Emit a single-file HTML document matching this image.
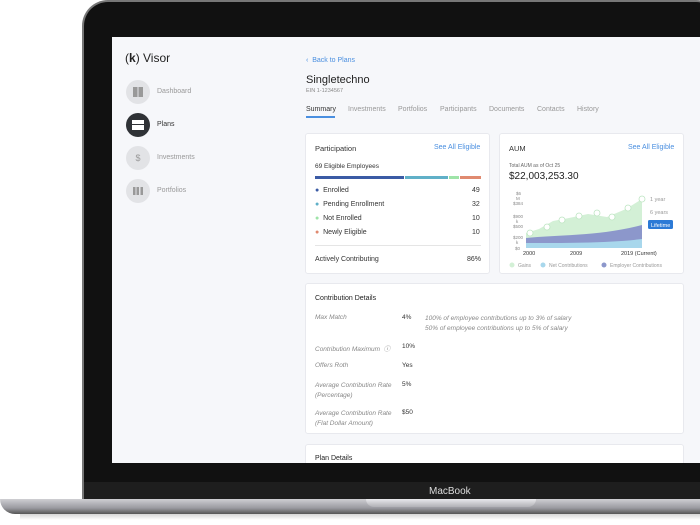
<!DOCTYPE html>
<html><head><style>
*{margin:0;padding:0;box-sizing:border-box}
body{width:700px;height:525px;background:#fff;position:relative;overflow:hidden;font-family:"Liberation Sans",sans-serif;color:#333}
.abs{position:absolute}
.bezel{left:82px;top:0;width:640px;height:502px;background:#111;border-radius:26px 26px 0 0;border:2px solid #777;border-bottom:none}
.chin{left:84px;top:482px;width:620px;height:18px;background:#1e1e1e}
.base{left:0;top:499px;width:700px;height:15px;background:linear-gradient(#cfcfd3,#9a9aa0 60%,#555 100%);border-radius:0 0 0 30px}
.notch{left:366px;top:499px;width:170px;height:8px;background:linear-gradient(#e9e9ec,#b0b0b5);border-radius:0 0 8px 8px}
.shadow{left:20px;top:512px;width:680px;height:8px;background:linear-gradient(#777,#fff);opacity:.4}
.screen{left:112px;top:37px;width:588px;height:426px;background:#f6f7fa;overflow:hidden}
.card{position:absolute;background:#fff;border:1px solid #e8e9ee;border-radius:3px}
.t{position:absolute;white-space:nowrap}
.icon{position:absolute;left:14px;width:24px;height:24px;border-radius:50%;background:#e2e3e6}
.nav{position:absolute;left:45px;font-size:7px;color:#999}
.s{font-size:7px}
.lbl{font-size:6.5px;font-style:italic;color:#888}
</style></head><body>
<div class="abs shadow"></div>
<div class="abs bezel"></div>
<div class="abs chin"></div>
<div class="abs t" style="left:429px;top:486px;font-size:10px;color:#ddd">MacBook</div>
<div class="abs base"></div>
<div class="abs notch"></div>
<div class="abs screen">
 <div class="t" style="left:13px;top:14px;font-size:12px;color:#222">(<b>k</b>) Visor</div>
 <div class="icon" style="top:43px"><div style="position:absolute;left:7px;top:7px;width:10px;height:10px;background:linear-gradient(90deg,#999 45%,transparent 45%,transparent 55%,#999 55%)"></div></div>
 <div class="nav" style="top:51px">Dashboard</div>
 <div class="icon" style="top:76px;background:#2f3236"><div style="position:absolute;left:6px;top:7px;width:12px;height:10px;background:#fff;border-top:4px solid #fff"><div style="height:1px;background:#2f3236;margin-top:0"></div></div></div>
 <div class="nav" style="top:84px;color:#333">Plans</div>
 <div class="icon" style="top:109px;text-align:center;font-size:9px;line-height:24px;color:#999">$</div>
 <div class="nav" style="top:117px">Investments</div>
 <div class="icon" style="top:142px"><div style="position:absolute;left:7px;top:8px;width:10px;height:8px;background:linear-gradient(90deg,#999 25%,transparent 25%,transparent 37%,#999 37%,#999 62%,transparent 62%,transparent 75%,#999 75%)"></div></div>
 <div class="nav" style="top:150px">Portfolios</div>

 <div class="t s" style="left:194px;top:20px;color:#4a8fe0">‹ &nbsp;Back to Plans</div>
 <div class="t" style="left:194px;top:37px;font-size:11px;color:#222">Singletechno</div>
 <div class="t" style="left:194px;top:51px;font-size:5.5px;color:#888">EIN 1-1234567</div>
 <div class="t s" style="left:194px;top:69px;color:#333">Summary</div>
 <div class="abs" style="left:194px;top:79px;width:29px;height:1.5px;background:#4a8fe0"></div>
 <div class="t s" style="left:236px;top:69px;color:#999">Investments</div>
 <div class="t s" style="left:286px;top:69px;color:#999">Portfolios</div>
 <div class="t s" style="left:328px;top:69px;color:#999">Participants</div>
 <div class="t s" style="left:377px;top:69px;color:#999">Documents</div>
 <div class="t s" style="left:425px;top:69px;color:#999">Contacts</div>
 <div class="t s" style="left:465px;top:69px;color:#999">History</div>

 <div class="card" style="left:193px;top:96px;width:185px;height:141px">
  <div class="t" style="left:9px;top:10px;font-size:7.5px;color:#333">Participation</div>
  <div class="t s" style="left:128px;top:10px;color:#4a8fe0">See All Eligible</div>
  <div class="t" style="left:9px;top:29px;font-size:6.5px">69 Eligible Employees</div>
  <div class="abs" style="left:9px;top:42px;width:89px;height:3px;background:#3b5ba5"></div>
  <div class="abs" style="left:99px;top:42px;width:43px;height:3px;background:#60b0c8"></div>
  <div class="abs" style="left:143px;top:42px;width:10px;height:3px;background:#9ee4a8"></div>
  <div class="abs" style="left:154px;top:42px;width:21px;height:3px;background:#e08a70"></div>
  <div class="t s" style="left:9px;top:53px"><span style="color:#3b5ba5">●</span> &nbsp;Enrolled</div><div class="t s" style="left:166px;top:53px">49</div>
  <div class="t s" style="left:9px;top:67px"><span style="color:#60b0c8">●</span> &nbsp;Pending Enrollment</div><div class="t s" style="left:166px;top:67px">32</div>
  <div class="t s" style="left:9px;top:81px"><span style="color:#9ee4a8">●</span> &nbsp;Not Enrolled</div><div class="t s" style="left:166px;top:81px">10</div>
  <div class="t s" style="left:9px;top:95px"><span style="color:#e08a70">●</span> &nbsp;Newly Eligible</div><div class="t s" style="left:166px;top:95px">10</div>
  <div class="abs" style="left:9px;top:111px;width:166px;height:1px;background:#e5e5e5"></div>
  <div class="t s" style="left:9px;top:122px">Actively Contributing</div><div class="t s" style="left:161px;top:122px">86%</div>
 </div>

 <div class="card" style="left:387px;top:96px;width:185px;height:141px">
  <div class="t" style="left:9px;top:10px;font-size:7.5px">AUM</div>
  <div class="t s" style="left:128px;top:10px;color:#4a8fe0">See All Eligible</div>
  <div class="t" style="left:9px;top:29px;font-size:5px;color:#666">Total AUM as of Oct 25</div>
  <div class="t" style="left:9px;top:37px;font-size:10px;color:#222">$22,003,253.30</div>
  <svg class="abs" style="left:0;top:55px" width="185" height="86">
   <g font-size="4.5" fill="#888" font-family="Liberation Sans">
    <text x="16" y="6">$6</text><text x="16" y="11">M</text><text x="13" y="16">$384</text>
    <text x="13" y="29">$900</text><text x="16" y="34">k</text><text x="13" y="39">$500</text>
    <text x="13" y="50">$200</text><text x="16" y="55">k</text><text x="15" y="61">$0</text>
   </g>
   <path d="M26 56 L26 44 L39 40 L53 32 L69 29 L88 25 L107 28 L126 20 L142 10 L142 59 L26 59Z" fill="#d3f0d6"/>
   <path d="M26 49 C57 46 102 47 142 36 L142 59 L26 59Z" fill="#8c97cb"/>
   <path d="M26 54 C65 54 110 54 142 50 L142 59 L26 59Z" fill="#a8d7ec"/>
   <g fill="#fff" stroke="#bde5c2" stroke-width=".8">
    <circle cx="30" cy="44" r="3"/><circle cx="47" cy="38" r="3"/><circle cx="62" cy="31" r="3"/><circle cx="79" cy="27" r="3"/><circle cx="97" cy="24" r="3"/><circle cx="112" cy="28" r="3"/><circle cx="128" cy="19" r="3"/><circle cx="142" cy="10" r="3"/>
   </g>
   <g font-size="5.5" fill="#333" font-family="Liberation Sans"><text x="23" y="66">2000</text><text x="70" y="66">2009</text><text x="121" y="66">2019 (Current)</text></g>
   <g font-size="5.5" fill="#999" font-family="Liberation Sans"><text x="150" y="12">1 year</text><text x="150" y="25">6 years</text></g>
   <rect x="148" y="31" width="25" height="9" rx="1.5" fill="#2c7ad6"/><text x="151" y="38" font-size="5.5" fill="#fff" font-family="Liberation Sans">Lifetime</text>
   <g font-size="5" fill="#999" font-family="Liberation Sans">
    <circle cx="12" cy="76" r="2.5" fill="#d3f0d6"/><text x="18" y="78">Gains</text>
    <circle cx="43" cy="76" r="2.5" fill="#a8d7ec"/><text x="49" y="78">Net Contributions</text>
    <circle cx="104" cy="76" r="2.5" fill="#8c97cb"/><text x="110" y="78">Employer Contributions</text>
   </g>
  </svg>
 </div>

 <div class="card" style="left:193px;top:246px;width:379px;height:151px">
  <div class="t" style="left:9px;top:11px;font-size:7px;color:#222">Contribution Details</div>
  <div class="t lbl" style="left:9px;top:30px">Max Match</div>
  <div class="t s" style="left:96px;top:30px;font-size:6.5px">4%</div>
  <div class="t lbl" style="left:119px;top:30px;line-height:10px">100% of employee contributions up to 3% of salary<br>50% of employee contributions up to 5% of salary</div>
  <div class="t lbl" style="left:9px;top:59px">Contribution Maximum &nbsp;ⓘ</div><div class="t" style="left:96px;top:59px;font-size:6.5px">10%</div>
  <div class="t lbl" style="left:9px;top:78px">Offers Roth</div><div class="t" style="left:96px;top:78px;font-size:6.5px">Yes</div>
  <div class="t lbl" style="left:9px;top:97px;line-height:10px">Average Contribution Rate<br>(Percentage)</div><div class="t" style="left:96px;top:97px;font-size:6.5px">5%</div>
  <div class="t lbl" style="left:9px;top:125px;line-height:10px">Average Contribution Rate<br>(Flat Dollar Amount)</div><div class="t" style="left:96px;top:125px;font-size:6.5px">$50</div>
 </div>
 <div class="card" style="left:193px;top:407px;width:379px;height:40px">
  <div class="t" style="left:9px;top:10px;font-size:7px;color:#222">Plan Details</div>
 </div>
</div>
</body></html>
